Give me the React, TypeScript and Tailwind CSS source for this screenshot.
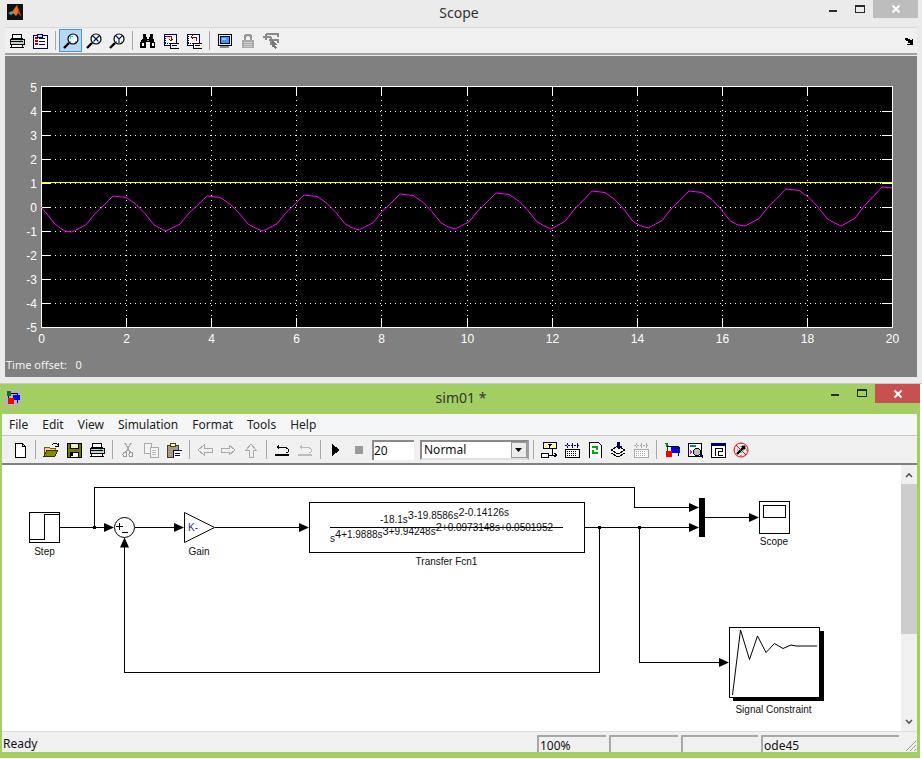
import type { ReactNode } from 'react'

const sans = "font-['Liberation_Sans',Arial,sans-serif]"

const Ico = ({ children }: { children: ReactNode }) => (
  <svg width="16" height="16" viewBox="0 0 16 16" shapeRendering="crispEdges">{children}</svg>
)

// scope toolbar icons
const Printer = () => (
  <Ico>
    <path d="M4 1h8l1 4H3z" fill="#fff" stroke="#000" />
    <path d="M1 6h14v5H1z" fill="#ccc" stroke="#000" />
    <path d="M3 11h10l1 3H2z" fill="#fff" stroke="#000" />
    <path d="M2 8h12" stroke="#000" />
    <path d="M11 7h2" stroke="#0ee" />
  </Ico>
)
const Params = () => (
  <Ico>
    <path d="M1 2h4v-1h5v1h5v13H1z" fill="#fff" stroke="#006" />
    <path d="M3 5h3M3 8h3M3 11h3" stroke="#a00" strokeWidth="2" />
    <path d="M7 5h6M7 8h6M7 11h6" stroke="#006" />
    <path d="M5 1h5v3H5z" fill="#ddd" stroke="#006" />
  </Ico>
)
const Lens = ({ kind }: { kind: string }) => (
  <svg width="16" height="16" viewBox="0 0 16 16">
    <circle cx="10" cy="6" r="5" fill="#fff" stroke="#000" strokeWidth="1.2" />
    <path d="M6 10l-5 5" stroke="#000" strokeWidth="2.4" />
    {kind === 'xy' && <path d="M7 3l6 6M13 3l-6 6" stroke="#006" strokeWidth="1.1" />}
    {kind === 'y' && <path d="M7 3l3 3l3-3M10 6v4" stroke="#006" fill="none" strokeWidth="1.1" />}
    {kind === 'plain' && <path d="M7 3h3v1H8v2H7z" fill="#0ee" />}
    <path d="M12 8h1v1h-1zM7 8h1v1H7z" fill="#0ee" />
  </svg>
)
const Binoculars = () => (
  <Ico>
    <path d="M3 1h3v3h1v2h2V4h1V1h3v4l2 5v5H10V9H6v6H0v-5l3-5z" fill="#000" />
    <path d="M2 10h2v3H2zM12 10h2v3h-2z" fill="#fff" />
    <path d="M7 7h2v1H7z" fill="#888" />
  </Ico>
)
const SaveAxes = ({ back }: { back?: boolean }) => (
  <Ico>
    <path d="M1 1h12v11H1z" fill="#fff" stroke="#006" />
    <path d="M2 3v8M2 10h10" stroke="#006" strokeDasharray="1 1" />
    <path d={back ? 'M5 4h5v4M5 4l2-2M5 4l2 2' : 'M3 3h5v4M6 6l2 2l2-2'} fill="none" stroke="#a00" />
    <path d="M7 10h9v5H7z" fill="#eee" stroke="#000" />
    <path d="M9 12h5" stroke="#000" />
  </Ico>
)
const Floating = () => (
  <Ico>
    <path d="M1 1h13v11H1z" fill="#e8e8e8" stroke="#000" />
    <path d="M3 3h9v7H3z" fill="#39f" stroke="#003" />
    <path d="M5 5h4v2H5z" fill="#9cf" />
    <path d="M3 13h9v2H3z" fill="#888" />
  </Ico>
)
const Lock = () => (
  <Ico>
    <path d="M5 7V3h1V2h4v1h1v4" fill="none" stroke="#999" strokeWidth="1.5" />
    <path d="M2 7h12v8H2z" fill="#aaa" />
    <path d="M4 9h8M4 11h8M4 13h8" stroke="#ccc" />
  </Ico>
)
const Selector = () => (
  <Ico>
    <path d="M0 4h8M3 1h12v3M6 7h9v3M8 4v8M3 1v6" fill="none" stroke="#888" strokeWidth="1.5" />
    <path d="M9 7l6 5l-3 0l2 3l-2 1l-2-3l-1 1z" fill="#777" />
  </Ico>
)

// model toolbar icons
const NewFile = () => (
  <Ico>
    <path d="M3 1h7l3 3v11H3z" fill="#fff" stroke="#000" />
    <path d="M10 1v3h3" fill="none" stroke="#000" />
  </Ico>
)
const OpenFile = () => (
  <Ico>
    <path d="M1 5h5l1 1h5v2H4l-3 6z" fill="#fc6" stroke="#660" />
    <path d="M1 14l3-6h11l-3 6z" fill="#880" stroke="#330" />
    <path d="M9 3l2-2h2l2 2M15 1v3h-3" fill="none" stroke="#000" />
  </Ico>
)
const Disk = () => (
  <Ico>
    <path d="M1 1h14v14H1z" fill="#770" stroke="#000" />
    <path d="M4 1h8v5H4z" fill="#eec" stroke="#000" />
    <path d="M4 10h8v5H4z" fill="#fff" stroke="#000" />
    <path d="M5 11h2v3H5z" fill="#000" />
  </Ico>
)
const Cut = () => (
  <Ico>
    <path d="M5 1l5 9M11 1l-5 9" stroke="#aaa" strokeWidth="1.4" />
    <circle cx="5" cy="12.5" r="2" fill="none" stroke="#999" />
    <circle cx="11" cy="12.5" r="2" fill="none" stroke="#999" />
  </Ico>
)
const Copy = () => (
  <Ico>
    <path d="M1 1h7v10H1z" fill="#f4f4f4" stroke="#aaa" />
    <path d="M7 5h8v10H7z" fill="#f4f4f4" stroke="#aaa" />
    <path d="M9 8h4M9 10h4M9 12h4" stroke="#bbb" />
  </Ico>
)
const Paste = () => (
  <Ico>
    <path d="M1 3h11v12H1z" fill="#a98" stroke="#442" />
    <path d="M4 1h5v3H4z" fill="#ff9" stroke="#442" />
    <path d="M7 8h9v8H7z" fill="#fff" stroke="#006" />
    <path d="M9 11h5M9 13h5" stroke="#006" />
  </Ico>
)
const Arrow = ({ d }: { d: string }) => (
  <Ico>
    <path d={d} fill="#f0f0f0" stroke="#aaa" />
  </Ico>
)
const Undo = ({ off }: { off?: boolean }) => {
  const c = off ? '#bbb' : '#000'
  return (
    <Ico>
      <path d="M1 13h14" stroke={c} strokeWidth="2" />
      <path d="M3 5h8l3 2v3l-2 1" fill="none" stroke={c} />
      <path d="M5 2v6L2 5z" fill={c} />
    </Ico>
  )
}
const Play = () => (
  <Ico>
    <path d="M4 2l8 6l-8 6z" fill="#000" />
  </Ico>
)
const Stop = () => (
  <Ico>
    <path d="M4 4h8v8H4z" fill="#999" />
  </Ico>
)
const Browser = () => (
  <Ico>
    <path d="M2 0h13v6H2z" fill="#ff9" stroke="#006" />
    <path d="M6 2h5l-2 2v2H8V4z" fill="#006" />
    <path d="M0 11h7v4H0z" fill="#fff" stroke="#000" />
    <path d="M7 13h8M13 11l3 2l-3 2M11 6v7" fill="none" stroke="#000" />
  </Ico>
)
const Keyboard = ({ off }: { off?: boolean }) => {
  const c = off ? '#aaa' : '#000'
  const a = off ? '#aaa' : '#006'
  return (
    <Ico>
      <path d="M1 7h14v8H1z" fill="#fff" stroke={c} />
      <path d="M3 9h10M3 11h10M3 13h10" stroke={c} strokeDasharray="1 1" />
      <path d="M3 1v5M8 1v5M13 1v5M1 3h14" stroke={a} strokeDasharray="2 1" />
    </Ico>
  )
}
const Refresh = () => (
  <Ico>
    <path d="M2 0h9l3 3v13H2z" fill="#fff" stroke="#000" />
    <path d="M5 5h5v3M11 11H6V8" fill="none" stroke="#0a0" strokeWidth="2" />
  </Ico>
)
const Stack = () => (
  <Ico>
    <path d="M1 8l7-4l7 4l-7 4z" fill="#fff" stroke="#000" />
    <path d="M1 11l7 4l7-4" fill="none" stroke="#000" />
    <path d="M7 0h3v4h2l-3 4l-3-4h1z" fill="#006" />
  </Ico>
)
const SimIcon = () => (
  <Ico>
    <path d="M3 1v14" stroke="#060" />
    <path d="M1 1h3l-1 5z" fill="#080" />
    <path d="M7 5h9v6H7z" fill="#00f" />
    <circle cx="5" cy="12" r="3.5" fill="#f00" />
    <path d="M3 4h11v10" fill="none" stroke="#000" />
  </Ico>
)
const Inspector = () => (
  <Ico>
    <path d="M1 1h13v13H1z" fill="#fff" stroke="#000" />
    <path d="M3 3h6v2H3z" fill="#088" />
    <path d="M3 8l3 2l-3 2z" fill="#f0f" />
    <circle cx="10" cy="10" r="3.5" fill="#bbb" stroke="#000" />
    <path d="M13 13l3 2" stroke="#006" strokeWidth="2" />
  </Ico>
)
const Explorer = () => (
  <Ico>
    <path d="M1 1h14v14H1z" fill="#fff" stroke="#000" />
    <path d="M1 1h14v3H1z" fill="#006" />
    <path d="M5 6v8M5 6h7v3H8v4h5" fill="none" stroke="#000" />
  </Ico>
)
const NoDebug = () => (
  <svg width="16" height="16" viewBox="0 0 16 16">
    <circle cx="8" cy="8" r="7" fill="#eee" stroke="#f00" />
    <path d="M3 3l10 10" stroke="#f00" />
    <path d="M4 12l8-8M9 4l3 3" stroke="#000" strokeWidth="2.4" />
    <path d="M8 1v14M1 8h14" stroke="#555" strokeDasharray="1 2" />
  </svg>
)

const Btn = ({ children, active }: { children: ReactNode; active?: boolean }) => (
  <div
    className={
      active
        ? 'w-[23px] h-[23px] flex items-center justify-center bg-[#b8d7f2] border border-[#4d94dc]'
        : 'w-[23px] h-[23px] flex items-center justify-center'
    }
  >
    {children}
  </div>
)

const Sep = () => (
  <div className="w-2 h-[23px] flex justify-center py-[2px]">
    <div className="w-px bg-[#a6a6a6]" />
  </div>
)

const WinControls = ({ close }: { close: string }) => (
  <div className="flex justify-end items-start">
    <div className="w-[8px] h-[2px] bg-[#2b2b2b] mt-[10px] mr-[18px]" />
    <div className="w-[10px] h-[8px] border border-t-2 border-[#2b2b2b] mt-[5px] mr-[8px]" />
    <div className={close}>
      <svg width="10" height="10" viewBox="0 0 10 10">
        <path d="M1.5 1.5l7 7M8.5 1.5l-7 7" stroke="#fff" strokeWidth="2" />
      </svg>
    </div>
  </div>
)

// x of each trough, y of trough, y of the following peak
const cycles = [
  [72, 231, 195],
  [166, 230, 195],
  [263, 230, 194],
  [359, 229, 193],
  [455, 228, 192],
  [551, 228, 190],
  [648, 227, 190],
  [745, 225, 188],
  [841, 225, 186],
]
const shape = [
  [0, 0], [14, 0.2], [23, 0.51], [31, 0.72], [41, 1], [54, 0.96], [64, 0.77], [73, 0.51], [82, 0.2], [89, 0.09],
]
const curve = [
  [41, 206], [47, 213], [54, 222], [60, 227], [65, 230],
  ...cycles.flatMap(([t, lo, hi]) => shape.map(([dx, f]) => [t + dx, lo + (hi - lo) * f])),
].filter(p => p[0] < 892)
curve.push([892, 187])
const curvePoints = curve.map(p => `${p[0]},${p[1]}`).join(' ')

const yTicks = [5, 4, 3, 2, 1, 0, -1, -2, -3, -4, -5]
const xTicks = [0, 2, 4, 6, 8, 10, 12, 14, 16, 18, 20]
const yOf = (v: number) => Math.round(206 - v * 24.08) + 0.5
const xOf = (v: number) => Math.round(41 + v * 42.55) + 0.5

const Chart = () => (
  <svg width="912" height="299" viewBox="5 55 912 299" className="block">
    <rect x="41.5" y="85.5" width="851" height="241" fill="#000" stroke="#fff" />
    <g shapeRendering="crispEdges" stroke="#fff">
      {yTicks.slice(1, -1).map(v => (
        <g key={v}>
          <path d={`M50 ${yOf(v)}H882`} strokeDasharray="1 4" />
          <path d={`M41 ${yOf(v)}h9M882 ${yOf(v)}h10`} />
        </g>
      ))}
      {xTicks.slice(1, -1).map(v => (
        <g key={v}>
          <path d={`M${xOf(v)} 94V317`} strokeDasharray="1 4" />
          <path d={`M${xOf(v)} 85v9M${xOf(v)} 317v10`} />
        </g>
      ))}
    </g>
    <path d="M41 181.5H892" stroke="#ffff00" shapeRendering="crispEdges" />
    <polyline points={curvePoints} fill="none" stroke="#ff00ff" />
    <g className={`${sans} text-[12px] fill-white`}>
      {yTicks.map(v => (
        <text key={v} x="37" y={yOf(v) + 4.5} textAnchor="end">{v}</text>
      ))}
      {xTicks.map(v => (
        <text key={v} x={xOf(v)} y="342" textAnchor="middle">{v}</text>
      ))}
    </g>
  </svg>
)

const Head = ({ x, y, dir = 'r' }: { x: number; y: number; dir?: 'r' | 'u' }) => (
  <path
    d={
      dir === 'r'
        ? `M${x} ${y}l-10 -4.5v9z`
        : `M${x} ${y}l-4.5 10h9z`
    }
    fill="#000"
  />
)

const Sup = ({ children }: { children: ReactNode }) => (
  <>
    <tspan dy="-3.5" fontSize="11">{children}</tspan>
    <tspan dy="3.5"></tspan>
  </>
)

const Diagram = () => (
  <svg width="899" height="266" viewBox="2 465 899 266" className="block">
    <g fill="none" stroke="#000" strokeWidth="1" shapeRendering="crispEdges">
      <rect x="29.5" y="512.5" width="30" height="30" />
      <path d="M30 539.5H44.5V514.5H59" />
      <path d="M60 527.5H106M135 527.5H176M215 527.5H301M585 527.5H691M94.5 527V487.5H634.5V507.5H691" />
      <path d="M705 517.5H751M124.5 547V672.5H599.5V527M639.5 527V662.5H721" />
      <rect x="309.5" y="502.5" width="275" height="50" />
      <path d="M330 527.5H563" />
      <rect x="759.5" y="501.5" width="30" height="32" />
      <rect x="763.5" y="505.5" width="22" height="12" />
    </g>
    <circle cx="124.5" cy="527.5" r="10" fill="#fff" stroke="#000" />
    <path d="M119.5 523v7M116 526.5h7M122 532.5h6" stroke="#000" />
    <path d="M184.5 512.5L214.5 527.5L184.5 542.5Z" fill="#fff" stroke="#000" />
    <Head x={114} y={527.5} />
    <Head x={184} y={527.5} />
    <Head x={309} y={527.5} />
    <Head x={699} y={507.5} />
    <Head x={699} y={527.5} />
    <Head x={759} y={517.5} />
    <Head x={729} y={662.5} />
    <Head x={124.5} y={537.5} dir="u" />
    <path d="M93 526h3v3h-3zM598 526h3v3h-3zM638 526h3v3h-3z" fill="#000" />
    <path d="M699 498h6v39h-6z" fill="#000" />
    <path d="M733 631h91v70h-91z" fill="#000" />
    <rect x="729.5" y="627.5" width="90" height="70" fill="#fff" stroke="#000" />
    <path
      d="M732.5 695L740.5 630L749.5 659.5L757.5 636L766 652.5L774.5 643.5L783 648.5L791 645L796 646H817"
      fill="none"
      stroke="#000"
    />
    <g className={`${sans} text-[10px] fill-[#111]`}>
      <text x="44.5" y="554.5" textAnchor="middle">Step</text>
      <text x="199" y="554.5" textAnchor="middle">Gain</text>
      <text x="188" y="530.5" fill="#22337a">K-</text>
      <text x="446.5" y="564.5" textAnchor="middle">Transfer Fcn1</text>
      <text x="774" y="545" textAnchor="middle">Scope</text>
      <text x="773.5" y="713" textAnchor="middle">Signal Constraint</text>
      <text x="380" y="522.5">-18.1s<Sup>3</Sup>-19.8586s<Sup>2</Sup>-0.14126s</text>
      <text x="330" y="541.5">s<Sup>4</Sup>+1.9888s<Sup>3</Sup>+9.94248s<Sup>2</Sup>+0.0973148s+0.0501952</text>
    </g>
  </svg>
)

const Chevron = ({ up }: { up?: boolean }) => (
  <svg width="8" height="6" viewBox="0 0 8 6">
    <path d={up ? 'M1 5l3-3l3 3' : 'M1 1l3 3l3-3'} fill="none" stroke="#555" strokeWidth="1.6" />
  </svg>
)

const StatusCell = ({ w, text }: { w: string; text?: string }) => (
  <div className={`${w} h-full border-t-2 border-l-2 border-[#a8a8a8] pl-px leading-[17px] text-[12px] font-['Noto_Sans',sans-serif]`}>{text}</div>
)

export default function App() {
  return (
    <div className="w-[922px] h-[759px] bg-white overflow-hidden flex flex-col text-[#111]">
      {/* scope window */}
      <div className="h-[384px] shrink-0 bg-[#ebebeb] border-b border-[#c9c9c9]">
        <div className="h-[27px] pr-1 grid grid-cols-[1fr_auto_1fr]">
          <div className="pl-[7px] pt-1">
            <svg width="16" height="16" viewBox="0 0 16 16">
              <rect width="16" height="16" fill="#111" />
              <path d="M1 9l4-2l2 2l-3 2z" fill="#3a9fd6" />
              <path d="M5 8l5-7l4 11l-3-3l-2 3z" fill="#e8731c" />
              <path d="M10 1l4 11l-3-3z" fill="#b5391a" />
            </svg>
          </div>
          <div className="font-['Noto_Sans',sans-serif] text-[14px] leading-[25px] text-[#333]">Scope</div>
          <WinControls close="w-[45px] h-[18px] bg-[#bdbdbd] flex items-center justify-center" />
        </div>
        <div className="mx-[5px] h-[28px] bg-[#f0f0f0] border-t border-[#d9d9d9] border-b-2 border-b-[#a0a0a0] flex items-center pl-[-1px] relative">
          <div className="w-[0px]" />
          <Btn><Printer /></Btn>
          <Btn><Params /></Btn>
          <Sep />
          <Btn active><Lens kind="plain" /></Btn>
          <Btn><Lens kind="xy" /></Btn>
          <Btn><Lens kind="y" /></Btn>
          <Sep />
          <Btn><Binoculars /></Btn>
          <Btn><SaveAxes /></Btn>
          <Btn><SaveAxes back /></Btn>
          <Sep />
          <Btn><Floating /></Btn>
          <Btn><Lock /></Btn>
          <Btn><Selector /></Btn>
          <div className="flex-1 flex justify-end pr-[2px]">
            <svg width="10" height="8" viewBox="0 0 10 8" shapeRendering="crispEdges">
              <path d="M0 1h3v1h2v1h2V2h1v6H2V7h3V6H3V4H1V3H0z" fill="#000" />
            </svg>
          </div>
        </div>
        <div className="mx-[5px] mt-px h-[321px] bg-[#808080]">
          <Chart />
          <div className={`h-[22px] pl-px text-[11px] leading-[20px] text-[#f2f2f2] font-['Noto_Sans',sans-serif]`}>
            Time offset:&nbsp;&nbsp;&nbsp;0
          </div>
        </div>
      </div>

      {/* model window */}
      <div className="w-[920px] h-[374px] shrink-0 bg-[#a3cf62] px-[2px] flex flex-col">
        <div className="h-[30px] -mx-[2px] grid grid-cols-[1fr_auto_1fr]">
          <div className="pl-[5px] pt-[6px]">
            <svg width="16" height="16" viewBox="0 0 16 16" shapeRendering="crispEdges">
              <rect width="16" height="16" fill="#b5b5b5" />
              <path d="M3 2v12M3 3h9v10" fill="none" stroke="#000" />
              <path d="M2 1h4v5H2z" fill="#0a7a0a" />
              <path d="M8 5h7v5H8z" fill="#00f" />
              <circle cx="6" cy="11" r="3.5" fill="#f00" />
            </svg>
          </div>
          <div className="font-['Noto_Sans',sans-serif] text-[14px] leading-[28px] text-[#333] pl-[2px]">sim01 *</div>
          <div className="pr-0">
            <WinControls close="w-[45px] h-[19px] bg-[#c75050] flex items-center justify-center" />
          </div>
        </div>
        <div className="h-[21px] mr-px bg-[#f5f6f7] flex items-center pl-[7px] gap-[14px] text-[12px] font-['Noto_Sans',sans-serif] text-[#222]">
          <span>File</span>
          <span>Edit</span>
          <span>View</span>
          <span>Simulation</span>
          <span>Format</span>
          <span>Tools</span>
          <span>Help</span>
        </div>
        <div className="h-[30px] mr-px bg-[#f0f0f0] border-t border-[#c8c8c8] border-b-2 border-b-[#808080] flex items-center pl-[6px]">
          <Btn><NewFile /></Btn>
          <Sep />
          <Btn><OpenFile /></Btn>
          <Btn><Disk /></Btn>
          <Btn><Printer /></Btn>
          <Sep />
          <Btn><Cut /></Btn>
          <Btn><Copy /></Btn>
          <Btn><Paste /></Btn>
          <Sep />
          <Btn><Arrow d="M7 3L1 8l6 5v-3h8V6H7z" /></Btn>
          <Btn><Arrow d="M9 3l6 5l-6 5v-3H1V6h8z" /></Btn>
          <Btn><Arrow d="M3 8l5-6l5 6h-3v7H6V8z" /></Btn>
          <Sep />
          <Btn><Undo /></Btn>
          <Btn><Undo off /></Btn>
          <Sep />
          <Btn><Play /></Btn>
          <Btn><Stop /></Btn>
          <div className="ml-[2px] w-[42px] h-[20px] bg-white border-t-2 border-l-2 border-[#8a8a8a] leading-[17px] text-[12px] font-['Noto_Sans',sans-serif]">20</div>
          <div className="ml-[6px] w-[109px] h-[20px] bg-white border-2 border-[#8a8a8a] border-r-[#a0a0a0] border-b-[#e0e0e0] flex items-center justify-between pl-[2px] text-[12px] font-['Noto_Sans',sans-serif]">
            <span className="leading-[16px]">Normal</span>
            <div className="w-4 h-4 bg-[#ececec] border border-[#9a9a9a] flex items-center justify-center">
              <svg width="8" height="4" viewBox="0 0 8 4"><path d="M0 0h7l-3.5 4z" fill="#000" /></svg>
            </div>
          </div>
          <Sep />
          <Btn><Browser /></Btn>
          <Btn><Keyboard /></Btn>
          <Btn><Refresh /></Btn>
          <Btn><Stack /></Btn>
          <Btn><Keyboard off /></Btn>
          <Sep />
          <Btn><SimIcon /></Btn>
          <Btn><Inspector /></Btn>
          <Btn><Explorer /></Btn>
          <Btn><NoDebug /></Btn>
        </div>
        <div className="h-[266px] mr-px flex bg-white">
          <Diagram />
          <div className="w-[16px] bg-[#f0f0f0] flex flex-col items-center">
            <div className="h-[19px] flex items-center"><Chevron up /></div>
            <div className="h-[150px] w-full bg-[#cdcdcd]" />
            <div className="flex-1 flex items-end pb-[6px]"><Chevron /></div>
          </div>
        </div>
        <div className="h-[21px] mr-px bg-[#f0f0f0] border-t border-[#dcdcdc] flex pt-[3px]">
          <div className="w-[535px] pl-px text-[12px] leading-[17px] font-['Noto_Sans',sans-serif]">Ready</div>
          <StatusCell w="w-[69px] mr-[3px]" text="100%" />
          <StatusCell w="w-[69px] mr-[3px]" />
          <StatusCell w="w-[77px] mr-[3px]" />
          <StatusCell w="w-[138px]" text="ode45" />
          <div className="flex-1 flex items-end justify-end">
            <svg width="14" height="14" viewBox="0 0 14 14">
              <path d="M13 3L3 13M13 7L7 13M13 11L11 13" stroke="#a0a0a0" />
            </svg>
          </div>
        </div>
      </div>
    </div>
  )
}
